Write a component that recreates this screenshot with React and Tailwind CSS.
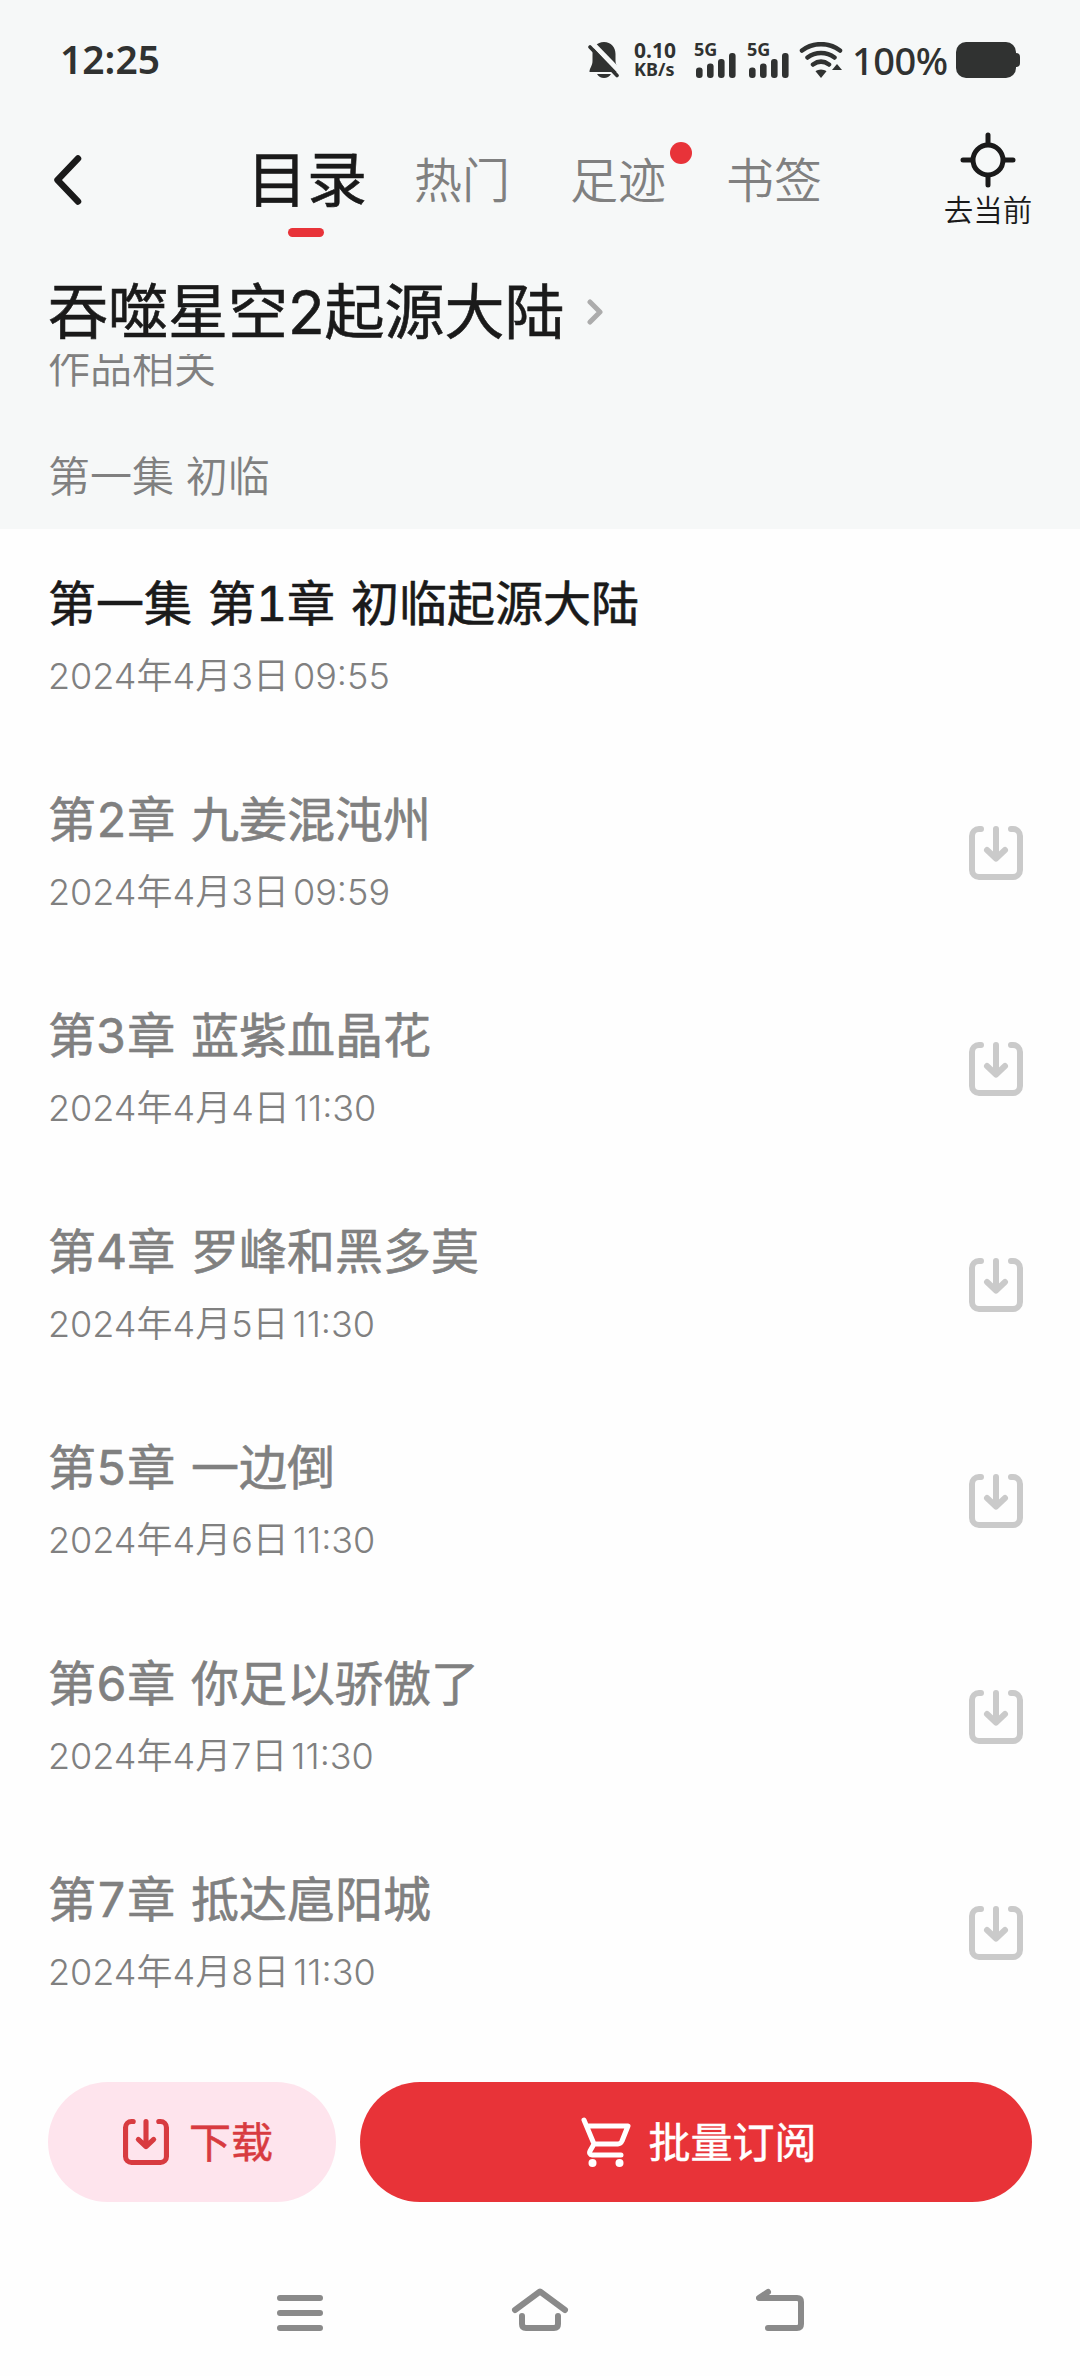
const fontUi = "font-['Inter','Noto_Sans_CJK_SC',sans-serif]"

const chapters = [
  { title: '第一集 第1章 初临起源大陆', date: '2024年4月3日', time: '09:55', current: true },
  { title: '第2章 九姜混沌州', date: '2024年4月3日', time: '09:59' },
  { title: '第3章 蓝紫血晶花', date: '2024年4月4日', time: '11:30' },
  { title: '第4章 罗峰和黑多莫', date: '2024年4月5日', time: '11:30' },
  { title: '第5章 一边倒', date: '2024年4月6日', time: '11:30' },
  { title: '第6章 你足以骄傲了', date: '2024年4月7日', time: '11:30' },
  { title: '第7章 抵达扈阳城', date: '2024年4月8日', time: '11:30' },
]

function DownloadIcon({ className }) {
  return (
    <svg viewBox="0 0 54 54" className={className} fill="none" stroke="currentColor" strokeWidth="6" strokeLinecap="round" strokeLinejoin="round">
      <path d="M12 3H10a7 7 0 0 0-7 7v34a7 7 0 0 0 7 7h34a7 7 0 0 0 7-7V10a7 7 0 0 0-7-7h-2" />
      <path d="M27 3v29M18 24l9 8.5 9-8.5" />
    </svg>
  )
}

function Signal() {
  return (
    <div className="flex h-9 w-[42px] flex-col justify-between">
      <span className="h-3 text-[18px] leading-[15px] font-bold">5G</span>
      <svg viewBox="0 0 42 26" className="-mt-1 h-[26px] w-[42px]" fill="currentColor">
        <rect x="2" y="15.500" width="6.600" height="10.500" rx="3" />
        <rect x="13" y="11.500" width="6.600" height="14.500" rx="3" />
        <rect x="24" y="7" width="6.600" height="19" rx="3" />
        <rect x="35" y="1" width="6.600" height="25" rx="3" />
      </svg>
    </div>
  )
}

function StatusBar() {
  return (
    <div className="flex h-[120px] items-center justify-between px-[60px] font-['Noto_Sans',sans-serif] text-[#303231]">
      <span className="-mt-1 text-[39px] leading-none font-semibold">12:25</span>
      <div className="flex items-center">
        <svg viewBox="0 0 32 36" className="h-9 w-8" fill="currentColor">
          <path d="M16 0c7 0 11.500 5 11.500 12v7c0 5 4 7 4 11H1.500c0-4 3-6 3-11v-7C4.500 5 9 0 16 0Z" />
          <path d="M9 32h14c-1.500 2.500-4 4-7 4s-5.500-1.500-7-4Z" />
          <path d="M4 1l30 31" stroke="#f6f8f8" strokeWidth="5" />
          <path d="M2 5l27 28.500" stroke="currentColor" strokeWidth="3.600" strokeLinecap="round" />
        </svg>
        <div className="ml-[14px] flex w-[44px] flex-col font-bold">
          <span className="text-[21px] leading-[19px]">0.10</span>
          <span className="text-[18px] leading-[19px]">KB/s</span>
        </div>
        <div className="ml-4 flex gap-[11px]">
          <Signal />
          <Signal />
        </div>
        <svg viewBox="0 0 44 36" className="ml-[10px] h-9 w-11" fill="none" stroke="currentColor" strokeWidth="4.500" strokeLinecap="round">
          <path d="M3 8.500C14 0 30 0 41 8.500M8.500 15.500c8-6 19-6 27 0M14 22.500c5-3.600 11-3.600 16 0" />
          <path d="M22 27.500c2 0 4 .8 5.500 1.800L22 36l-5.500-6.700c1.500-1 3.500-1.800 5.500-1.800Z" fill="currentColor" stroke="none" />
          <path d="M38 22l5 6H33Z" fill="currentColor" stroke="none" />
        </svg>
        <span className="ml-[9px] w-[99px] text-[38px] leading-none font-medium tracking-[-0.5px]">100%</span>
        <div className="ml-[5px] h-9 w-[60px] rounded-[10px] bg-[#303231]" />
        <div className="h-[14px] w-1 rounded-r bg-[#303231]" />
      </div>
    </div>
  )
}

function Header() {
  return (
    <header className="flex h-[120px] items-center px-[48px]">
      <svg viewBox="0 0 28 50" className="ml-[6px] h-[50px] w-7" fill="none" stroke="#1a1a1a" strokeWidth="6.500" strokeLinecap="round" strokeLinejoin="round">
        <path d="M24 3.500L3.500 25 24 46.500" />
      </svg>
      <nav className="ml-[165px] flex items-center text-[48px] leading-none font-[350] text-[#808080]">
        <div className="relative text-[60px] font-normal text-[#1a1a1a] [-webkit-text-stroke:0.6px]">
          目录
          <i className="absolute -bottom-[27px] left-[41px] h-[9px] w-9 rounded-full bg-[#e83339]" />
        </div>
        <span className="mt-[2px] ml-[47px]">热门</span>
        <div className="relative mt-[2px] ml-[60px]">
          足迹
          <i className="absolute -top-[15px] left-[100px] size-[22px] rounded-full bg-[#e83339]" />
        </div>
        <span className="mt-[2px] ml-[60px]">书签</span>
      </nav>
      <div className="-mr-px ml-auto flex w-[90px] flex-col items-center">
        <svg viewBox="0 0 56 56" className="size-14" fill="none" stroke="#1a1a1a" strokeWidth="5" strokeLinecap="round">
          <circle cx="28" cy="28" r="15" />
          <path d="M28 3v9M28 44v9M3 28h9M44 28h9" />
        </svg>
        <span className="mt-[6px] mb-[2px] text-[29.5px] leading-[32px] font-[350] whitespace-nowrap text-[#1a1a1a]">去当前</span>
      </div>
    </header>
  )
}

function Chapter({ title, date, time, current }) {
  return (
    <li className="flex h-[216px] items-center justify-between px-[48px]">
      <div className="flex flex-col">
        <span className={`text-[48px] leading-[60px] font-normal tabular-nums [word-spacing:3px] [-webkit-text-stroke:0.6px] ${current ? 'text-[#1a1a1a]' : 'text-[#808080]'}`}>{title}</span>
        <span className="mt-[18px] flex gap-1 text-[36px] leading-[48px] font-[350] text-[#808080]">
          <span>{date}</span>
          <span>{time}</span>
        </span>
      </div>
      {!current && <DownloadIcon className="mr-[9px] size-[54px] text-[#cacaca]" />}
    </li>
  )
}

function Actions() {
  return (
    <div className="flex h-[201px] gap-6 px-[48px] pt-[41px] text-[42px] font-normal [-webkit-text-stroke:0.5px]">
      <button className="flex h-[120px] w-[288px] items-center justify-center gap-[20px] rounded-full bg-[#fee4ed] pl-3 text-[#d83b40]">
        <DownloadIcon className="size-[46px]" />
        下载
      </button>
      <button className="flex h-[120px] flex-1 items-center justify-center gap-[17px] rounded-full bg-[#e83338] pl-[6px] text-white">
        <svg viewBox="0 0 50 50" className="size-[50px]" fill="none" stroke="currentColor" strokeWidth="5" strokeLinecap="round" strokeLinejoin="round">
          <path d="M3 3l10 24h24c2 0 3-1 4-3l6-15H6M13 27l-4 7c-1 2 0 4 2 4h29" />
          <circle cx="11.500" cy="46" r="4" fill="currentColor" stroke="none" />
          <circle cx="38.500" cy="46" r="4" fill="currentColor" stroke="none" />
        </svg>
        批量订阅
      </button>
    </div>
  )
}

function NavBar() {
  return (
    <div className="flex h-[134px] items-center justify-between px-[276px] pt-[6px] text-[#8a8a8a]">
      <svg viewBox="0 0 48 48" className="size-12" fill="none" stroke="currentColor" strokeWidth="6" strokeLinecap="round">
        <path d="M4 10h40M4 25h40M4 40h40" />
      </svg>
      <svg viewBox="0 0 60 48" className="h-12 w-[60px]" fill="none" stroke="currentColor" strokeWidth="6" strokeLinecap="round" strokeLinejoin="round">
        <path d="M5 22L30 3.500 55 22M12 28v8q0 4 4 4h28q4 0 4-4v-8" />
      </svg>
      <svg viewBox="0 0 48 48" className="size-12" fill="none" stroke="currentColor" strokeWidth="6" strokeLinecap="round" strokeLinejoin="round">
        <path d="M12 4L3 10h38q4 0 4 4v22q0 4-4 4H12" />
      </svg>
    </div>
  )
}

export default function App() {
  return (
    <div className={`flex h-[2376px] w-[1080px] flex-col overflow-hidden bg-[#fefefe] ${fontUi}`}>
      <div className="h-[529px] bg-[#f6f8f8]">
        <StatusBar />
        <Header />
        <div className="flex h-[114px] items-center gap-[22px] pt-[30px] pl-[48px]">
          <h1 className="text-[60px] leading-[84px] font-normal text-[#1a1a1a] [-webkit-text-stroke:0.6px]">吞噬星空2起源大陆</h1>
          <svg viewBox="0 0 16 26" className="h-[26px] w-4" fill="none" stroke="#acacac" strokeWidth="5" strokeLinecap="round" strokeLinejoin="round">
            <path d="M3 3l10 10L3 23" />
          </svg>
        </div>
        {/* volume list, scrolled so its first row is cut by the book title */}
        <div className="flex h-[175px] flex-col justify-end overflow-hidden pl-[48px] text-[42px] font-[350] text-[#808080]">
          <div className="flex h-[108px] shrink-0 items-center">作品相关</div>
          <div className="flex h-[108px] shrink-0 items-center pt-[2px]">第一集 初临</div>
        </div>
      </div>
      <ul>
        {chapters.map((c) => (
          <Chapter key={c.title} {...c} />
        ))}
      </ul>
      <Actions />
      <NavBar />
    </div>
  )
}
